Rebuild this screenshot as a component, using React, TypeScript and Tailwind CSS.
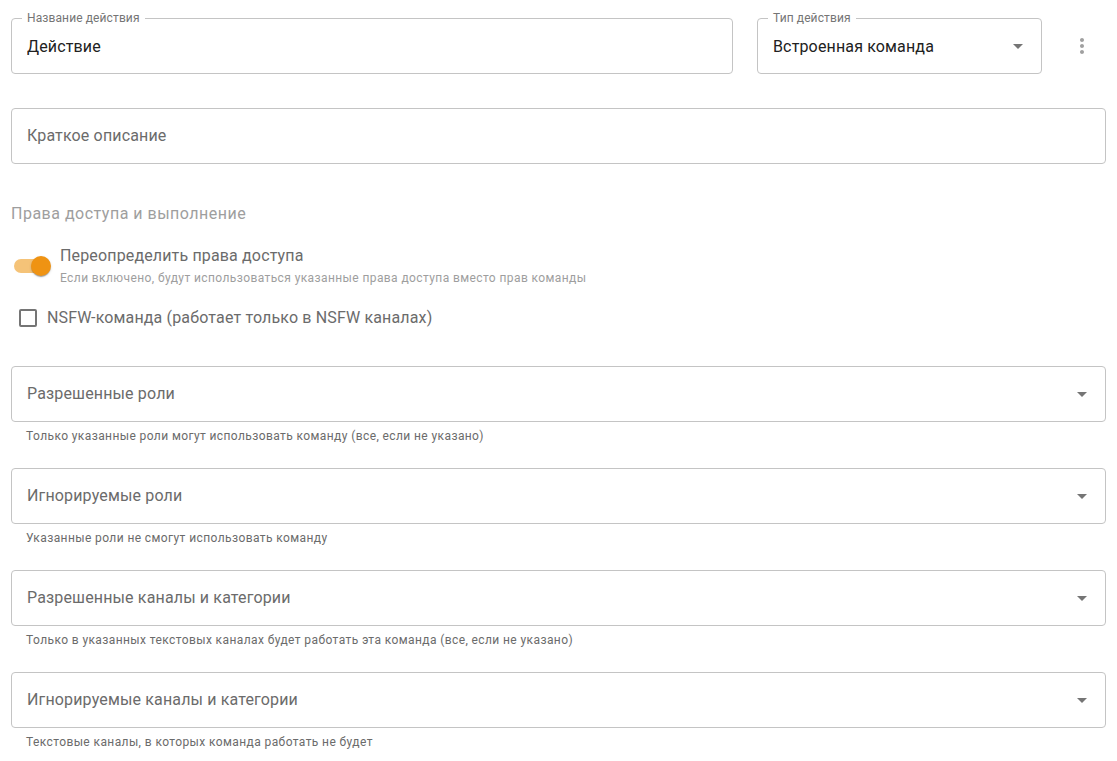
import React from "react";

type FieldProps = {
  label?: string;
  value?: string;
  placeholder?: string;
  select?: boolean;
  className?: string;
};

function ArrowDrop() {
  return (
    <svg viewBox="0 0 24 24" className="w-6 h-6 fill-[#757575] shrink-0">
      <path d="M7 10l5 5 5-5z" />
    </svg>
  );
}

/** MUI-like outlined field: notched label, value or placeholder, optional dropdown arrow. */
function OutlinedField({ label, value, placeholder, select, className }: FieldProps) {
  return (
    <div
      className={`relative h-14 rounded-[4px] border border-[#c4c4c4] flex items-center pl-[15px] pr-[11px] ${className ?? ""}`}
    >
      {label && (
        <span className="absolute -top-[9px] left-[10px] px-[5px] bg-white text-[12px] leading-[16px] tracking-[0.11px] text-[#757575]">
          {label}
        </span>
      )}
      <span
        className={`flex-1 text-[16px] leading-[24px] tracking-[0.15px] truncate ${label ? "pt-[1px]" : ""} ${value ? "text-[#212121]" : "text-[#6b6b6b]"}`}
      >
        {value ?? placeholder}
      </span>
      {select && <ArrowDrop />}
    </div>
  );
}

function SelectBlock({ placeholder, helper }: { placeholder: string; helper: string }) {
  return (
    <div>
      <OutlinedField placeholder={placeholder} select />
      <p className="mt-[4px] ml-[15px] text-[12px] leading-[20px] tracking-[0.4px] text-[#6b6b6b]">{helper}</p>
    </div>
  );
}

export default function App() {
  return (
    <div className="min-h-screen bg-white font-['Roboto',sans-serif] px-[11px] pt-[18px] pb-6">
      <div className="flex items-center">
        <OutlinedField label="Название действия" value="Действие" className="flex-1" />
        <OutlinedField
          label="Тип действия"
          value="Встроенная команда"
          select
          className="w-[285px] ml-6"
        />
        <button type="button" className="ml-4 w-12 h-12 flex items-center justify-center" aria-label="Ещё">
          <svg viewBox="0 0 24 24" className="w-6 h-6 fill-[#a0a0a0]">
            <path d="M12 8c1.1 0 2-.9 2-2s-.9-2-2-2-2 .9-2 2 .9 2 2 2zm0 2c-1.1 0-2 .9-2 2s.9 2 2 2 2-.9 2-2-.9-2-2-2zm0 6c-1.1 0-2 .9-2 2s.9 2 2 2 2-.9 2-2-.9-2-2-2z" />
          </svg>
        </button>
      </div>

      <OutlinedField placeholder="Краткое описание" className="mt-[34px]" />

      <h3 className="mt-[38px] text-[16px] leading-[24px] tracking-[0.5px] text-[#9e9e9e]">
        Права доступа и выполнение
      </h3>

      <div className="mt-[18px] flex items-center">
        <div className="relative w-[37px] h-5 ml-[3px] mr-[9px] shrink-0">
          <div className="absolute left-0 top-[3px] w-[34px] h-[14px] rounded-full bg-[#f5c378]" />
          <div className="absolute left-[17px] top-0 w-5 h-5 rounded-full bg-[#ef9313] shadow-[0_2px_1px_-1px_rgba(0,0,0,0.2),0_1px_1px_0_rgba(0,0,0,0.14),0_1px_3px_0_rgba(0,0,0,0.12)]" />
        </div>
        <div>
          <div className="text-[16px] leading-[24px] tracking-[0.15px] text-[#6b6b6b]">Переопределить права доступа</div>
          <div className="text-[12px] leading-[20px] tracking-[0.4px] text-[#9e9e9e]">
            Если включено, будут использоваться указанные права доступа вместо прав команды
          </div>
        </div>
      </div>

      <label className="mt-[9px] h-[42px] flex items-center">
        <span className="ml-[8px] w-[18px] h-[18px] rounded-[2px] border-2 border-[#757575] shrink-0" />
        <span className="ml-[10px] text-[16px] leading-[24px] tracking-[0.15px] text-[#6b6b6b]">
          NSFW-команда (работает только в NSFW каналах)
        </span>
      </label>

      <div className="mt-[27px] flex flex-col gap-[22px]">
        <SelectBlock
          placeholder="Разрешенные роли"
          helper="Только указанные роли могут использовать команду (все, если не указано)"
        />
        <SelectBlock placeholder="Игнорируемые роли" helper="Указанные роли не смогут использовать команду" />
        <SelectBlock
          placeholder="Разрешенные каналы и категории"
          helper="Только в указанных текстовых каналах будет работать эта команда (все, если не указано)"
        />
        <SelectBlock
          placeholder="Игнорируемые каналы и категории"
          helper="Текстовые каналы, в которых команда работать не будет"
        />
      </div>
    </div>
  );
}
